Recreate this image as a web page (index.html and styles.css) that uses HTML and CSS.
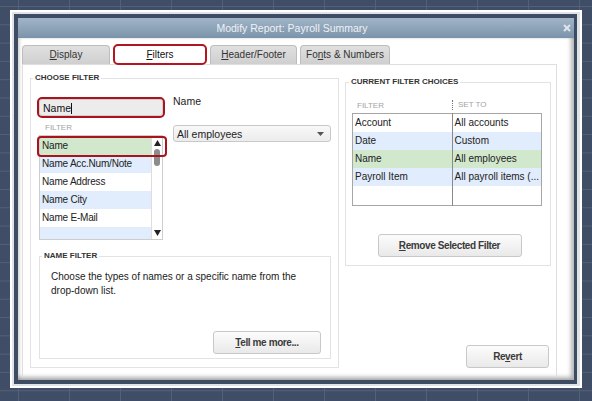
FILE: index.html
```html
<!DOCTYPE html>
<html>
<head>
<meta charset="UTF-8">
<title>Modify Report: Payroll Summary</title>
<link rel="stylesheet" href="styles.css">
</head>
<body>

<div class="frame">
  <div class="dialog">
    <div class="titlebar">
      <span class="title">Modify Report: Payroll Summary</span>
      <svg class="close" width="8" height="8" viewBox="0 0 8 8"><path d="M1 1L7 7M7 1L1 7" stroke="#dfe5eb" stroke-width="2"/></svg>
    </div>

    <div class="dialog-body">
      <div class="tabs">
        <div class="tab tab-display"><u>D</u>isplay</div>
        <div class="tab tab-filters active"><u>F</u>ilters</div>
        <div class="tab tab-header"><u>H</u>eader/Footer</div>
        <div class="tab tab-fonts">Fo<u>n</u>ts &amp; Numbers</div>
      </div>

      <div class="tab-page">
        <!-- left side: pick a filter and its value -->
        <fieldset class="group choose">
          <legend>CHOOSE FILTER</legend>
          <div class="choose-row">
            <div class="filter-col">
              <div class="search">Name<span class="caret"></span></div>
              <div class="col-label">FILTER</div>
              <div class="listbox">
                <ul class="filter-list">
                  <li class="selected">Name</li>
                  <li>Name Acc.Num/Note</li>
                  <li>Name Address</li>
                  <li>Name City</li>
                  <li>Name E-Mail</li>
                  <li></li>
                </ul>
                <div class="scrollbar">
                  <svg width="7" height="6" viewBox="0 0 7 6"><path d="M3.5 0L7 6H0Z" fill="#222"/></svg>
                  <div class="thumb"></div>
                  <div class="track"></div>
                  <svg width="7" height="6" viewBox="0 0 7 6"><path d="M0 0H7L3.5 6Z" fill="#222"/></svg>
                </div>
                <div class="mark"></div>
              </div>
            </div>
            <div class="value-col">
              <div class="value-label">Name</div>
              <div class="select">
                <span>All employees</span>
                <svg width="7" height="4" viewBox="0 0 7 4"><path d="M0 0H7L3.5 4Z" fill="#555"/></svg>
              </div>
            </div>
          </div>

          <fieldset class="group help">
            <legend>NAME FILTER</legend>
            <p>Choose the types of names or a specific name from the drop-down list.</p>
            <div class="help-actions">
              <button class="btn tell"><u>T</u>ell me more...</button>
            </div>
          </fieldset>
        </fieldset>

        <!-- right side: filters already applied -->
        <div class="right-col">
          <fieldset class="group current">
            <legend>CURRENT FILTER CHOICES</legend>
            <div class="table-head">
              <span class="th-filter">FILTER</span>
              <span class="th-set">SET TO</span>
            </div>
            <table class="choices">
              <tr><td>Account</td><td>All accounts</td></tr>
              <tr class="alt"><td>Date</td><td>Custom</td></tr>
              <tr class="picked"><td>Name</td><td>All employees</td></tr>
              <tr class="alt"><td>Payroll Item</td><td>All payroll items (...</td></tr>
              <tr class="empty"><td></td><td></td></tr>
            </table>
            <div class="remove-row">
              <button class="btn remove"><u>R</u>emove Selected Filter</button>
            </div>
          </fieldset>
          <button class="btn revert">Re<u>v</u>ert</button>
        </div>
      </div>
    </div>
  </div>
</div>

</body>
</html>
```

FILE: styles.css
```css
* {
  box-sizing: border-box;
}

body {
  margin: 0;
  width: 592px;
  height: 401px;
  padding: 10px;
  font-family: "Liberation Sans", Arial, sans-serif;
  font-size: 10px;
  color: #222;
  background-color: #3f4e66;
  /* spreadsheet grid showing under the dimmed backdrop */
  background-image:
    linear-gradient(90deg, #536177 1px, transparent 1px),
    linear-gradient(#536177 1px, transparent 1px);
  background-size: 51px 18.3px;
  background-position: 18px 6px;
}

.frame {
  width: 572px;
  height: 378px;
  border: 2px solid #fff;
  padding: 2px 3px 2px 2px;
  background: #dfe3e8;
}

.dialog {
  width: 563px;
  height: 370px;
  border: 4px solid #3d4c63;
  border-right-width: 3px;
  display: flex;
  flex-direction: column;
}

.titlebar {
  height: 20px;
  flex: 0 0 20px;
  background: linear-gradient(#a1b5c7, #7b93a9);
  display: flex;
  align-items: center;
  justify-content: center;
  position: relative;
}

.title {
  color: #eef2f6;
  font-size: 10.5px;
  padding-right: 8px;
}

.close {
  position: absolute;
  right: 3px;
  top: 6px;
}

.dialog-body {
  flex: 1;
  background: #fff;
  padding: 6px 17px 3px 4px;
  box-shadow: inset -3px -3px 4px rgba(0, 0, 0, 0.3), inset 2px 0 3px rgba(0, 0, 0, 0.15);
}

/* tab strip */
.tabs {
  display: flex;
  align-items: flex-end;
  gap: 3px;
  height: 20px;
}

.tab {
  height: 19px;
  line-height: 18px;
  text-align: center;
  font-size: 10px;
  color: #333;
  background: linear-gradient(#e0e0e0, #cfcfcf);
  border: 1px solid #bdbdbd;
  border-bottom: none;
  border-radius: 4px 4px 0 0;
}

.tab-display { width: 88px; }
.tab-filters { width: 94px; }
.tab-header { width: 87px; }
.tab-fonts { width: 90px; }

.tab.active {
  height: 21px;
  line-height: 17px;
  margin-bottom: -1px;
  background: #fff;
  border: 2px solid #b3161e;
  border-radius: 5px;
  color: #111;
  position: relative;
}

.tab-page {
  height: 313px;
  border: 1px solid #dedede;
  padding: 8px 5px 8px 7px;
  display: flex;
  gap: 6px;
}

/* grouped boxes with a caption on the top line */
.group {
  margin: 0;
  border: 1px solid #e2e2e2;
  min-width: 0;
}

.group legend {
  font-size: 8px;
  font-weight: bold;
  line-height: 10px;
  color: #333;
  padding: 0 2px;
  margin-left: -6px;
}

.choose {
  width: 309px;
  padding: 0 7px 8px 8px;
  display: flex;
  flex-direction: column;
}

.choose-row {
  display: flex;
  gap: 10px;
  height: 170px;
}

.filter-col {
  width: 124px;
  padding-top: 16px;
}

.search {
  height: 17px;
  line-height: 17px;
  padding-left: 3px;
  background: #ececec;
  border: 1px solid #cfcfcf;
  border-radius: 3px;
  outline: 2px solid #a9141c;
  font-size: 10.5px;
  color: #111;
}

.caret {
  display: inline-block;
  width: 1px;
  height: 11px;
  background: #111;
  vertical-align: -2px;
}

.col-label {
  padding: 6px 0 0 6px;
  line-height: 12px;
  height: 19px;
  font-size: 8px;
  color: #a3a3a3;
}

.listbox {
  position: relative;
  height: 105px;
  border: 1px solid #cdcdcd;
  display: flex;
}

.filter-list {
  flex: 1;
  margin: 0;
  padding: 1px 0 0;
  list-style: none;
  overflow: hidden;
}

.filter-list li {
  height: 18px;
  line-height: 18px;
  padding-left: 2px;
  letter-spacing: -0.2px;
}

.filter-list li:nth-child(even) {
  background: #e1edfc;
}

.filter-list li.selected {
  background: #d2e8cd;
}

.scrollbar {
  width: 11px;
  display: flex;
  flex-direction: column;
  align-items: center;
  padding: 4px 0 3px;
  border-left: 1px solid #ddd;
}

.thumb {
  width: 6px;
  height: 17px;
  margin-top: 3px;
  border-radius: 3px;
  background: #8c8c8c;
}

.track {
  flex: 1;
}

/* red call-out around the chosen row */
.mark {
  position: absolute;
  left: -3px;
  top: 0;
  width: 130px;
  height: 21px;
  border: 2px solid #a9141c;
  border-radius: 4px;
}

.value-col {
  width: 158px;
  padding-top: 12px;
}

.value-label {
  height: 30px;
  font-size: 10.5px;
}

.select {
  height: 17px;
  padding: 0 6px 0 3px;
  border: 1px solid #c9c9c9;
  border-radius: 3px;
  background: linear-gradient(#f8f8f8, #ececec);
  display: flex;
  align-items: center;
  justify-content: space-between;
  font-size: 10.5px;
}

.help {
  margin-top: auto;
  height: 108px;
  padding: 0 9px 5px 11px;
}

.help legend {
  margin-left: -9px;
}

.help p {
  margin: 9px 0 0;
  line-height: 14px;
  font-size: 10px;
  color: #222;
  width: 250px;
}

.help-actions {
  display: flex;
  justify-content: flex-end;
  margin-top: 33px;
}

.btn {
  height: 23px;
  font-family: inherit;
  font-size: 10px;
  font-weight: bold;
  letter-spacing: -0.4px;
  color: #3b3b3b;
  background: linear-gradient(#fcfcfc, #e9e9e9);
  border: 1px solid #c8c8c8;
  border-radius: 3px;
  padding: 0;
}

.tell {
  width: 108px;
}

.right-col {
  width: 206px;
  display: flex;
  flex-direction: column;
  padding-top: 4px;
}

.current {
  height: 189px;
  padding: 0 9px 8px 6px;
}

.current legend {
  margin-left: -3px;
}

.table-head {
  display: flex;
  height: 26px;
  align-items: center;
  font-size: 8px;
  color: #a3a3a3;
  padding-top: 10px;
}

.th-filter {
  width: 100px;
  padding-left: 5px;
}

.th-set {
  border-left: 1px dotted #777;
  padding-left: 5px;
  line-height: 10px;
}

.choices {
  width: 190px;
  border: 1px solid #a6a6a6;
  border-collapse: collapse;
  font-size: 10px;
}

.choices td {
  height: 18px;
  padding: 0 2px;
  white-space: nowrap;
}

.choices td:first-child {
  width: 100px;
  border-right: 1px solid #8a8a8a;
}

.choices tr.alt {
  background: #e1edfc;
}

.choices tr.picked {
  background: #d2e8cd;
}

.choices tr.empty td {
  height: 20px;
}

.remove-row {
  display: flex;
  justify-content: center;
  margin-top: 28px;
  padding-left: 6px;
}

.remove {
  width: 144px;
}

.revert {
  width: 83px;
  margin-top: auto;
  align-self: flex-end;
  margin-right: 2px;
}
```
